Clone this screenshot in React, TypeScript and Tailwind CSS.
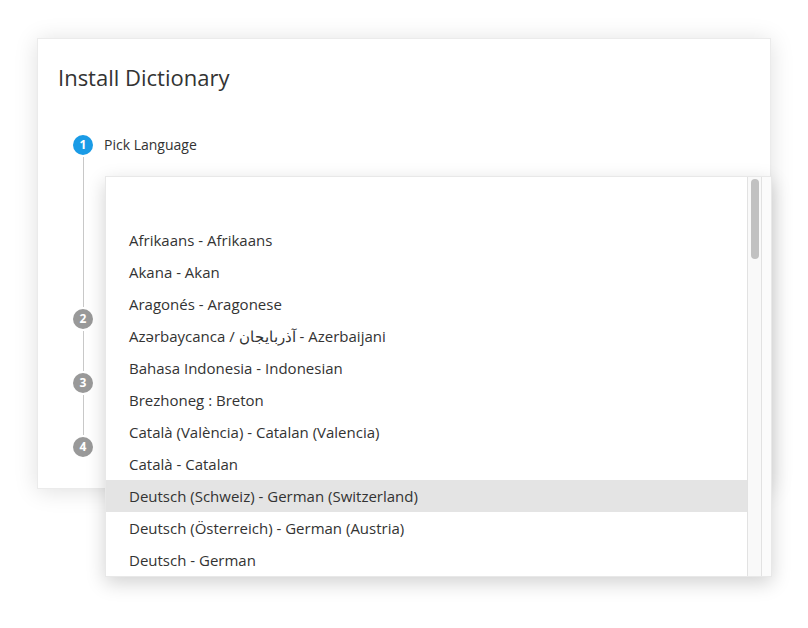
const languages = [
  "Afrikaans - Afrikaans",
  "Akana - Akan",
  "Aragonés - Aragonese",
  "Azərbaycanca / آذربایجان - Azerbaijani",
  "Bahasa Indonesia - Indonesian",
  "Brezhoneg : Breton",
  "Català (València) - Catalan (Valencia)",
  "Català - Catalan",
  "Deutsch (Schweiz) - German (Switzerland)",
  "Deutsch (Österreich) - German (Austria)",
  "Deutsch - German",
];

const Circle = ({ n, active }: { n: number; active?: boolean }) => (
  <div
    className={
      "w-[20px] h-[20px] rounded-full flex items-center justify-center text-white text-[12px] font-bold leading-none " +
      (active ? "bg-[#1a9be6]" : "bg-[#999]")
    }
  >
    {n}
  </div>
);

const Line = ({ h }: { h: string }) => <div className={"ml-[9.5px] w-px bg-[#c8c8c8] my-[2px] " + h}></div>;

export default function App() {
  return (
    <div className="w-[808px] h-[628px] bg-white pt-[38px] pl-[37px] font-['Open_Sans',sans-serif]">
      <div className="relative w-[734px] h-[451px] bg-white border border-[#ebebeb] shadow-[0_2px_22px_rgba(0,0,0,0.13)]">
        <h1 className="pl-[20px] pt-[22px] text-[22px] text-[#333] leading-[32px]">Install Dictionary</h1>
        <div className="flex flex-col pl-[35px] pt-[41px]">
          <div className="flex items-center gap-[11px]">
            <Circle n={1} active />
            <span className="text-[14px] text-[#333]">Pick Language</span>
          </div>
          <Line h="h-[150px]" />
          <Circle n={2} />
          <Line h="h-[40px]" />
          <Circle n={3} />
          <Line h="h-[40px]" />
          <Circle n={4} />
        </div>

        <div className="absolute left-[67px] top-[137px] w-[667px] h-[401px] bg-white border border-[#e8e8e8] shadow-[0_6px_18px_rgba(0,0,0,0.18)] flex">
          <div className="flex-1 flex flex-col pt-[47px]">
            {languages.map((l) => (
              <div
                key={l}
                className={
                  "h-[32px] flex items-center pl-[23px] text-[15px] text-[#333] " +
                  (l.startsWith("Deutsch (Schweiz)") ? "bg-[#e4e4e4]" : "")
                }
              >
                {l}
              </div>
            ))}
          </div>
          <div className="w-[15px] bg-[#f9f9f9] border-l border-r border-[#e2e2e2] pt-[2px] flex justify-center">
            <div className="w-[8px] h-[80px] rounded-full bg-[#c1c1c1]"></div>
          </div>
          <div className="w-[9px] bg-[#fbfbfb]"></div>
        </div>
      </div>
    </div>
  );
}
